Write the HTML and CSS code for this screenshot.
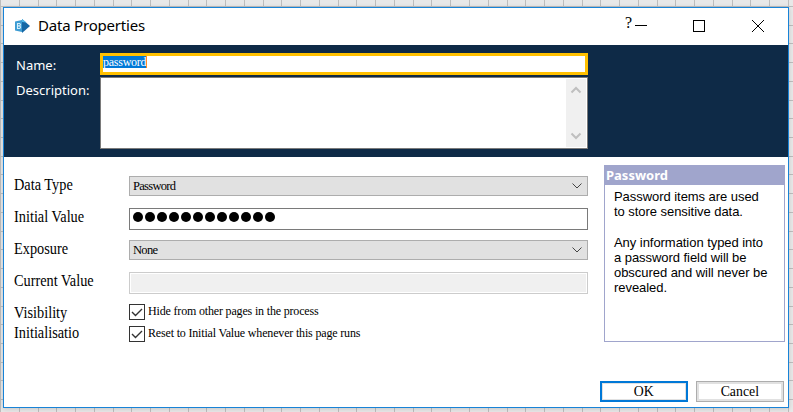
FILE: index.html
```html
<!DOCTYPE html>
<html lang="en">
<head>
<meta charset="utf-8">
<title>Data Properties</title>
<link rel="stylesheet" href="styles.css">
</head>
<body>
<main class="dialog">
  <header class="titlebar">
    <svg class="logo" width="17" height="16" viewBox="0 0 17 16"><path d="M8 1 16 8 8 15Z" fill="#1467a5"/><path d="M8 1 12.500 4.500 8 4Z" fill="#52b9e8"/><path d="M1 3.500 8 2v12l-7-1.500Z" fill="#3d9cd3"/><path d="M3.500 5.500h2q2 1.200 0 2.400h-2 2q2 1.300 0 2.600h-2z" fill="none" stroke="#d5effc" stroke-width="1.100"/></svg>
    <h1 class="title">Data Properties</h1>
    <span class="help">?</span>
    <svg class="controls" width="126" height="14" viewBox="0 0 126 14" fill="none" stroke="#000"><path shape-rendering="crispEdges" d="M0 6.500h12M58.500 1.500h11v11h-11z"/><path d="M117 1l12 12M129 1l-12 12"/></svg>
  </header>
  <section class="banner">
    <label class="banner-label">Name:</label>
    <div class="name-field"><span class="selection">password</span></div>
    <label class="banner-label desc-label">Description:</label>
    <div class="description">
      <div class="scrollbar">
        <svg width="12" height="8" viewBox="0 0 12 8"><path d="M1.500 6.500 6 2l4.500 4.500" fill="none" stroke="#bfbfbf" stroke-width="2"/></svg>
        <svg width="12" height="8" viewBox="0 0 12 8"><path d="M1.500 1.500 6 6l4.500-4.500" fill="none" stroke="#bfbfbf" stroke-width="2"/></svg>
      </div>
    </div>
  </section>
  <section class="content">
    <div class="form">
      <div class="row"><span class="label">Data Type</span><div class="select"><span class="value">Password</span><svg width="12" height="8" viewBox="0 0 12 8"><path d="M1.500 1.500 6 6l4.500-4.500" fill="none" stroke="#444"/></svg></div></div>
      <div class="row"><span class="label">Initial Value</span><div class="input"><i class="dot"></i><i class="dot"></i><i class="dot"></i><i class="dot"></i><i class="dot"></i><i class="dot"></i><i class="dot"></i><i class="dot"></i><i class="dot"></i><i class="dot"></i><i class="dot"></i><i class="dot"></i></div></div>
      <div class="row"><span class="label">Exposure</span><div class="select"><span class="value">None</span><svg width="12" height="8" viewBox="0 0 12 8"><path d="M1.500 1.500 6 6l4.500-4.500" fill="none" stroke="#444"/></svg></div></div>
      <div class="row"><span class="label">Current Value</span><div class="input disabled"></div></div>
      <div class="check-row"><span class="label">Visibility</span><span class="check"><svg width="14" height="14" viewBox="0 0 14 14"><path d="M2 7l3.500 3.500L12 4" fill="none" stroke="#333" stroke-width="1.400"/></svg></span><span class="check-text">Hide from other pages in the process</span></div>
      <div class="check-row"><span class="label init-label">Initialisatio</span><span class="check"><svg width="14" height="14" viewBox="0 0 14 14"><path d="M2 7l3.500 3.500L12 4" fill="none" stroke="#333" stroke-width="1.400"/></svg></span><span class="check-text">Reset to Initial Value whenever this page runs</span></div>
    </div>
    <aside class="side">
      <div class="info">
        <h2 class="info-title">Password</h2>
        <div class="info-body">
          <p>Password items are used<br>to store sensitive data.</p>
          <p>Any information typed into<br>a password field will be<br>obscured and will never be<br>revealed.</p>
        </div>
      </div>
      <div class="buttons">
        <button class="button primary"><span>OK</span></button>
        <button class="button"><span>Cancel</span></button>
      </div>
    </aside>
  </section>
</main>
</body>
</html>
```
FILE: styles.css
```css
* { box-sizing: border-box; }
body {
  margin: 0;
  width: 793px;
  height: 412px;
  padding: 7px 4px 4px 3px;
  overflow: hidden;
  background:
    repeating-linear-gradient(90deg, #bdbdbd 0 1px, transparent 1px 18.76px),
    repeating-linear-gradient(180deg, #bdbdbd 0 1px, transparent 1px 18.72px) 0 6px,
    #e8e8e8;
}
h1, h2, p { margin: 0; }
.dialog {
  width: 786px;
  height: 401px;
  border: 1px solid #1883d7;
  background: #fff;
  box-shadow: 0 1px 5px rgba(0, 0, 0, .15);
  font-family: "Liberation Serif", serif;
  color: #000;
}
.titlebar { display: flex; height: 37px; padding-left: 10px; }
.logo { margin-top: 10px; }
.title {
  width: 587px;
  margin-left: 7px;
  font: 400 15px/35px "Noto Sans", sans-serif;
  letter-spacing: -.2px;
  white-space: nowrap;
}
.help { width: 10px; font-size: 16px; line-height: 29px; }
.controls { margin-top: 11px; overflow: visible; }
.banner {
  display: grid;
  grid-template-columns: 84px 488px;
  grid-template-rows: 22px 72px;
  row-gap: 2px;
  height: 112px;
  padding: 8px 0 0 12px;
  background: #0e2a47;
}
.banner-label { font: 13px/24px "Noto Sans", sans-serif; color: #fff; }
.desc-label { padding-top: 1px; }
.name-field { height: 22px; border: 3px solid #ffc000; background: #fff; line-height: 0; }
.selection {
  display: inline-block;
  width: 44px;
  height: 12px;
  border-right: 1px solid #ff8728;
  background: #0078d7;
  color: #fff;
  font-size: 12px;
  line-height: 12px;
  letter-spacing: -.25px;
  white-space: nowrap;
}
.description { display: flex; justify-content: flex-end; border: 1px solid #7a7a7a; background: #fff; padding: 1px; }
.scrollbar {
  display: flex;
  flex-direction: column;
  align-items: center;
  justify-content: space-between;
  width: 20px;
  padding: 7px 0;
  background: #f0f0f0;
}
.content { display: flex; height: 250px; }
.form { width: 584px; padding: 19px 0 0 10px; }
.row { display: flex; height: 32px; }
.label {
  flex: 0 0 115px;
  font-size: 16px;
  line-height: 17px;
  white-space: nowrap;
  transform: scaleX(.895);
  transform-origin: left;
}
.select, .input { width: 459px; }
.select {
  display: flex;
  justify-content: space-between;
  height: 20px;
  padding: 0 4px 0 3px;
  border: 1px solid #adadad;
  background: #e1e1e1;
}
.select svg { margin-top: 5px; }
.value { font-size: 12.5px; line-height: 18px; letter-spacing: -.7px; }
.input { display: flex; gap: 2px; height: 22px; padding: 3px 0 0 3px; border: 1px solid #7a7a7a; background: #fff; }
.dot { width: 10px; height: 10px; border-radius: 50%; background: #000; }
.disabled { border-color: #ccc; background: #f0f0f0; box-shadow: inset 0 0 0 1px #fff; }
.check-row { display: flex; height: 22px; }
.init-label { margin-top: -2px; }
.check { width: 16px; height: 16px; border: 1px solid #333; line-height: 0; }
.check-text { margin-left: 3px; font-size: 12px; line-height: 14px; letter-spacing: -.17px; white-space: nowrap; }
.side { display: flex; flex-direction: column; justify-content: space-between; width: 197px; padding: 8px 0 5px 12px; }
.info { width: 181px; height: 177px; margin-left: 4px; border: 1px solid #a0a5cc; }
.info-title { height: 19px; padding-left: 1px; background: #a0a5cc; color: #fff; font: 700 13px/18px "Noto Sans", sans-serif; }
.info-body { padding: 4px 0 0 9px; font: 13px/15px "Liberation Sans", sans-serif; letter-spacing: -.05px; white-space: nowrap; }
.info-body p + p { margin-top: 16px; }
.buttons { display: flex; gap: 8px; }
.button {
  width: 88px;
  height: 21px;
  padding: 0;
  border: 1px solid #adadad;
  background: #fff;
  box-shadow: inset 0 0 0 2px #e1e1e1;
  font: 15px/17px "Liberation Serif", serif;
  color: #000;
}
.button span { display: inline-block; transform: scaleX(.92); }
.primary { border: 2px solid #0078d7; box-shadow: inset 0 0 0 1px #e1e1e1; }
```
